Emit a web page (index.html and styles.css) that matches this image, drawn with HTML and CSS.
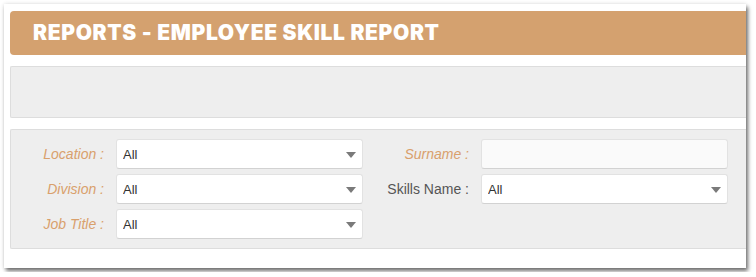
FILE: index.html
```html
<!DOCTYPE html>
<html lang="en">
<head>
  <meta charset="UTF-8">
  <meta name="viewport" content="width=device-width, initial-scale=1.0">
  <title>Employee Skill Report</title>
  <link rel="stylesheet" href="styles.css">
</head>
<body>
<div class="card">
  <h2 class="title">REPORTS - EMPLOYEE SKILL REPORT</h2>

  <div class="panel panel-empty"></div>

  <div class="panel filters">
    <label class="lbl" for="location">Location :</label>
    <div class="select-wrap">
      <select id="location"><option>All</option></select>
    </div>
    <label class="lbl" for="surname">Surname :</label>
    <input type="text" id="surname" class="text-input">

    <label class="lbl" for="division">Division :</label>
    <div class="select-wrap">
      <select id="division"><option>All</option></select>
    </div>
    <label class="lbl plain" for="skills">Skills Name :</label>
    <div class="select-wrap">
      <select id="skills"><option>All</option></select>
    </div>

    <label class="lbl" for="jobTitle">Job Title :</label>
    <div class="select-wrap">
      <select id="jobTitle"><option>All</option></select>
    </div>
  </div>
</div>
</body>
</html>
```

FILE: styles.css
```css
body {
  margin: 0;
  font-family: "Liberation Sans", Arial, sans-serif;
  background: #ffffff;
}
.card {
  margin: 4px;
  width: 742px;
  height: 264px;
  box-sizing: border-box;
  padding: 7px 0 0 6px;
  background: #ffffff;
  overflow: hidden;
  box-shadow: 2px 3px 4px rgba(0,0,0,0.55), 0 0 4px rgba(0,0,0,0.12);
}
.title {
  margin: 0 0 11px 0;
  height: 44px;
  line-height: 44px;
  padding-left: 23px;
  background: #d4a16f;
  border-radius: 4px 0 0 4px;
  color: #ffffff;
  font-family: Inter, sans-serif;
  font-weight: 900;
  font-size: 21px;
  letter-spacing: 0.65px;
}
.panel {
  background: #eeeeee;
  border: 1px solid #dddddd;
  border-right: none;
  border-radius: 2px 0 0 2px;
}
.panel-empty {
  height: 50px;
  margin-bottom: 11px;
}
.filters {
  height: 120px;
  box-sizing: border-box;
  padding: 9px 0;
  display: grid;
  grid-template-columns: 93px 247px 94px 247px;
  grid-auto-rows: 30px;
  column-gap: 12px;
  row-gap: 5px;
}
.lbl {
  align-self: center;
  text-align: right;
  font-size: 14px;
  font-style: italic;
  color: #d9a06c;
}
.lbl.plain {
  font-style: normal;
  color: #555555;
}
.select-wrap {
  position: relative;
}
.select-wrap::after {
  content: "";
  position: absolute;
  right: 7px;
  top: 13px;
  border-left: 5px solid transparent;
  border-right: 5px solid transparent;
  border-top: 6px solid #7a7a7a;
  pointer-events: none;
}
select, .text-input {
  display: block;
  width: 100%;
  height: 30px;
  box-sizing: border-box;
  margin: 0;
  padding: 0 6px;
  border: 1px solid #e2e2e2;
  border-bottom-color: #d2d2d2;
  border-radius: 3px;
  background: #ffffff;
  font-family: "Liberation Sans", Arial, sans-serif;
  font-size: 13px;
  color: #333333;
  appearance: none;
  -webkit-appearance: none;
  outline: none;
}
.text-input {
  background: #fafafa;
}
```
